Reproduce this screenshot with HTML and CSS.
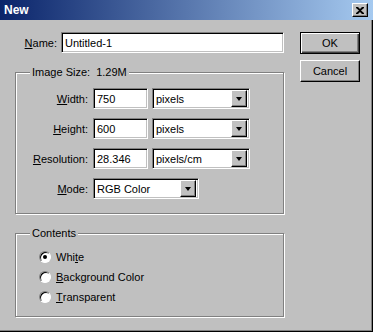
FILE: index.html
```
<!DOCTYPE html>
<html lang="en">
<head>
    <meta charset="UTF-8">
    <title>New</title>
    <link rel="stylesheet" href="styles.css">
</head>
<body>
    <div class="window">
        <div class="titlebar">
            <span class="title">New</span>
            <span class="close">
                <svg width="8" height="7" viewBox="0 0 8 7"><path d="M0 0h2l2 2 2-2h2v1L5 3.5 8 6v1H6L4 5 2 7H0V6l3-2.5L0 1z"/></svg>
            </span>
        </div>

        <div class="content">
            <div class="main">
                <div class="name-row">
                    <label><u>N</u>ame:</label>
                    <div class="field name-field">Untitled-1</div>
                </div>

                <div class="group size-group">
                    <div class="legend">Image Size:&nbsp; 1.29M</div>
                    <div class="rows">
                        <div class="row">
                            <label><u>W</u>idth:</label>
                            <div class="field num">750</div>
                            <div class="select unit">pixels<span class="drop"></span></div>
                        </div>
                        <div class="row">
                            <label><u>H</u>eight:</label>
                            <div class="field num">600</div>
                            <div class="select unit">pixels<span class="drop"></span></div>
                        </div>
                        <div class="row">
                            <label><u>R</u>esolution:</label>
                            <div class="field num">28.346</div>
                            <div class="select unit">pixels/cm<span class="drop"></span></div>
                        </div>
                        <div class="row">
                            <label><u>M</u>ode:</label>
                            <div class="select mode">RGB Color<span class="drop"></span></div>
                        </div>
                    </div>
                </div>

                <div class="group contents-group">
                    <div class="legend">Contents</div>
                    <div class="radios">
                        <div class="radio-row"><span class="radio checked"></span>Whi<u>t</u>e</div>
                        <div class="radio-row"><span class="radio"></span><u>B</u>ackground Color</div>
                        <div class="radio-row"><span class="radio"></span><u>T</u>ransparent</div>
                    </div>
                </div>
            </div>

            <div class="side">
                <div class="btn default">OK</div>
                <div class="btn">Cancel</div>
            </div>
        </div>
    </div>
</body>
</html>
```

FILE: styles.css
```
*{
    margin: 0;
    padding: 0;
    box-sizing: border-box;
}

body{
    font-family: "Liberation Sans", Arial, sans-serif;
    font-size: 11px;
    color: #000;
}

.window{
    width: 373px;
    height: 332px;
    background-color: #c0c0c0;
    box-shadow: inset -1px -1px 0 #000, inset -2px -2px 0 #808080;
    overflow: hidden;
}

.titlebar{
    height: 20px;
    display: flex;
    align-items: center;
    justify-content: space-between;
    padding: 0 5px 0 4px;
    background: linear-gradient(to right, #0a246a, #a6caf0);
}

.title{
    color: #fff;
    font-weight: bold;
    font-size: 12px;
}

.close{
    width: 16px;
    height: 14px;
    display: flex;
    align-items: center;
    justify-content: center;
    background-color: #c0c0c0;
    border: 1px solid;
    border-color: #fff #000 #000 #fff;
    box-shadow: inset -1px -1px 0 #808080;
}

.content{
    display: flex;
    padding: 12px 0 0 15px;
}

.main{
    width: 269px;
}

.side{
    margin-left: 16px;
    display: flex;
    flex-direction: column;
    gap: 6px;
}

.name-row{
    display: flex;
    align-items: center;
    justify-content: flex-end;
    gap: 4px;
}

.field, .select{
    height: 21px;
    background-color: #fff;
    border: 1px solid;
    border-color: #808080 #fff #fff #808080;
    box-shadow: inset 1px 1px 0 #000, inset -1px -1px 0 #c0c0c0;
    padding: 0 3px;
    display: flex;
    align-items: center;
    white-space: nowrap;
}

.name-field{
    width: 223px;
}

.group{
    border: 1px solid #808080;
    box-shadow: inset 1px 1px 0 #fff, 1px 1px 0 #fff;
}

.legend{
    width: fit-content;
    height: 13px;
    line-height: 13px;
    margin: -7px 0 0 14px;
    padding: 0 2px;
    background-color: #c0c0c0;
}

.size-group{
    margin-top: 19px;
    padding-bottom: 14px;
}

.rows{
    margin-top: 9px;
    display: flex;
    flex-direction: column;
    gap: 9px;
}

.row{
    display: flex;
    align-items: center;
}

.row label{
    width: 72px;
    text-align: right;
    margin-right: 5px;
}

.num{
    width: 55px;
}

.unit{
    width: 98px;
    margin-left: 4px;
}

.mode{
    width: 106px;
}

.select{
    justify-content: space-between;
    padding-right: 2px;
}

.drop{
    width: 16px;
    height: 17px;
    background-color: #c0c0c0;
    border: 1px solid;
    border-color: #fff #000 #000 #fff;
    box-shadow: inset -1px -1px 0 #808080;
    display: flex;
    align-items: center;
    justify-content: center;
}

.drop::after{
    content: "";
    border-left: 3.5px solid transparent;
    border-right: 3.5px solid transparent;
    border-top: 4px solid #000;
    margin: 1px 1px 0 0;
}

.contents-group{
    margin-top: 19px;
    padding-bottom: 9px;
}

.radios{
    margin-top: 7px;
    padding-left: 23px;
}

.radio-row{
    height: 20px;
    display: flex;
    align-items: center;
}

.radio{
    width: 12px;
    height: 12px;
    margin-right: 5px;
    border-radius: 50%;
    background-color: #fff;
    border: 1px solid;
    border-color: #808080 #fff #fff #808080;
    box-shadow: inset 1px 1px 0 #000;
    display: flex;
    align-items: center;
    justify-content: center;
}

.radio.checked::after{
    content: "";
    width: 4px;
    height: 4px;
    border-radius: 50%;
    background-color: #000;
}

.btn{
    width: 60px;
    height: 22px;
    display: flex;
    align-items: center;
    justify-content: center;
    background-color: #c0c0c0;
    border: 1px solid;
    border-color: #fff #000 #000 #fff;
    box-shadow: inset -1px -1px 0 #808080;
}

.btn.default{
    border-color: #000;
    box-shadow: inset 1px 1px 0 #fff, inset -1px -1px 0 #404040, inset -2px -2px 0 #808080;
}
```
